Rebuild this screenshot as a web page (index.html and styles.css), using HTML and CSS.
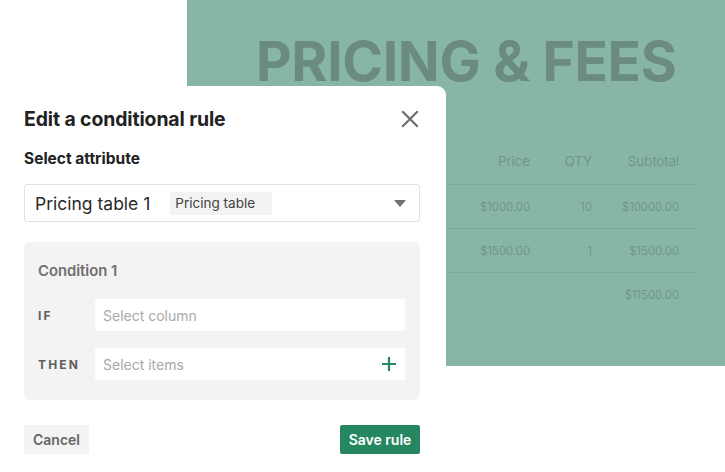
FILE: index.html
```html
<!DOCTYPE html>
<html>
<head>
<meta charset="utf-8">
<link rel="stylesheet" href="styles.css">
</head>
<body>
<div class="stage">
  <section class="doc">
    <h1 class="doc-title">PRICING &amp; FEES</h1>
    <div class="table">
      <div class="trow head"><span class="c-price">Price</span><span class="c-qty">QTY</span><span class="c-sub">Subtotal</span></div>
      <div class="trow line"><span class="c-price">$1000.00</span><span class="c-qty">10</span><span class="c-sub">$10000.00</span></div>
      <div class="trow line"><span class="c-price">$1500.00</span><span class="c-qty">1</span><span class="c-sub">$1500.00</span></div>
      <div class="trow line"><span class="c-price"></span><span class="c-qty"></span><span class="c-sub">$11500.00</span></div>
    </div>
  </section>

  <div class="modal">
    <div class="modal-head">
      <h2 class="modal-title">Edit a conditional rule</h2>
      <svg class="close" width="18" height="18" viewBox="0 0 18 18"><path d="M2 2L16 16M16 2L2 16" stroke="#6f6f6f" stroke-width="2.2" stroke-linecap="square"/></svg>
    </div>
    <div class="label">Select attribute</div>
    <div class="select">
      <span class="select-value">Pricing table 1</span>
      <span class="badge">Pricing table</span>
      <svg class="caret" width="12" height="7" viewBox="0 0 12 7"><path d="M0 0H12L6 7Z" fill="#6f6f6f"/></svg>
    </div>
    <div class="condition">
      <div class="cond-title">Condition 1</div>
      <div class="cond-row">
        <span class="kw">IF</span>
        <div class="input"><span class="ph">Select column</span></div>
      </div>
      <div class="cond-row">
        <span class="kw">THEN</span>
        <div class="input"><span class="ph">Select items</span>
          <svg class="plus" width="14" height="14" viewBox="0 0 14 14"><path d="M7 0V14M0 7H14" stroke="#24875f" stroke-width="2.2"/></svg>
        </div>
      </div>
    </div>
    <div class="actions">
      <button class="btn cancel">Cancel</button>
      <button class="btn save">Save rule</button>
    </div>
  </div>
</div>
</body>
</html>
```
FILE: styles.css
```css
* { box-sizing: border-box; }
html, body { margin: 0; padding: 0; background: #fff; }
body { font-family: "Inter", "Liberation Sans", sans-serif; width: 725px; height: 472px; overflow: hidden; }
.stage { position: relative; width: 725px; height: 472px; }

.doc {
  margin-left: 187px;
  width: 538px;
  height: 366px;
  background: #87b5a7;
  padding-top: 26px;
}
.doc-title {
  margin: 0 0 0 69px;
  font-size: 55px;
  font-weight: 700;
  letter-spacing: -0.3px;
  color: #6a8b7e;
  line-height: 70px;
}
.table { margin-top: 42px; width: 508px; }
.trow {
  display: flex;
  justify-content: flex-end;
  align-items: center;
  height: 44px;
  color: #6c8f82;
  font-size: 11.5px;
  font-weight: 300;
  padding-right: 16px;
}
.trow.head { font-size: 13.5px; height: 46px; }
.trow.line { border-top: 1px solid #7aa797; }
.c-price { width: 90px; text-align: right; }
.c-qty { width: 62px; text-align: right; }
.c-sub { width: 87px; text-align: right; }

.modal {
  position: absolute;
  left: 0;
  top: 86px;
  width: 446px;
  height: 400px;
  background: #fff;
  border-top-right-radius: 9px;
  padding: 20px 26px 0 24px;
}
.modal-head { display: flex; justify-content: space-between; align-items: center; height: 26px; }
.modal-title { margin: 0; font-size: 19.4px; font-weight: 700; color: #222; letter-spacing: -0.1px; }
.close { margin-right: 1px; }
.label { margin-top: 17px; font-size: 15.5px; font-weight: 700; color: #222; line-height: 19px; }
.select {
  margin-top: 16px;
  height: 38px;
  border: 1px solid #e1e1e1;
  border-radius: 3px;
  display: flex;
  align-items: center;
  padding: 0 13px 0 10px;
}
.select-value { font-size: 17.5px; color: #2a2a2a; font-weight: 400; }
.badge {
  margin-left: 20px;
  background: #f3f3f3;
  height: 23px;
  width: 102px;
  border-radius: 2px;
  font-size: 13.5px;
  color: #444;
  display: flex;
  align-items: center;
  padding-left: 5px;
}
.caret { margin-left: auto; }

.condition {
  margin-top: 20px;
  background: #f3f3f3;
  border-radius: 6px;
  height: 158px;
  padding: 20px 15px 0 14px;
}
.cond-title { font-size: 14.8px; font-weight: 600; color: #6f6f6f; height: 19px; }
.cond-row { display: flex; align-items: center; margin-top: 18px; }
.cond-row + .cond-row { margin-top: 17px; }
.kw { width: 57px; font-size: 12px; font-weight: 700; letter-spacing: 2.2px; color: #5e5e5e; }
.input {
  flex: 1;
  height: 32px;
  background: #fff;
  border-radius: 2px;
  display: flex;
  align-items: center;
  padding: 0 9px 0 8px;
}
.ph { font-size: 14px; color: #a9a9a9; }
.plus { margin-left: auto; }

.actions { display: flex; justify-content: space-between; margin-top: 25px; }
.btn { border: none; font-family: inherit; font-weight: 600; font-size: 14px; border-radius: 2px; height: 29px; cursor: pointer; }
.cancel { background: #f3f3f3; color: #666; width: 65px; }
.save { background: #25875f; color: #fff; width: 80px; }
```
